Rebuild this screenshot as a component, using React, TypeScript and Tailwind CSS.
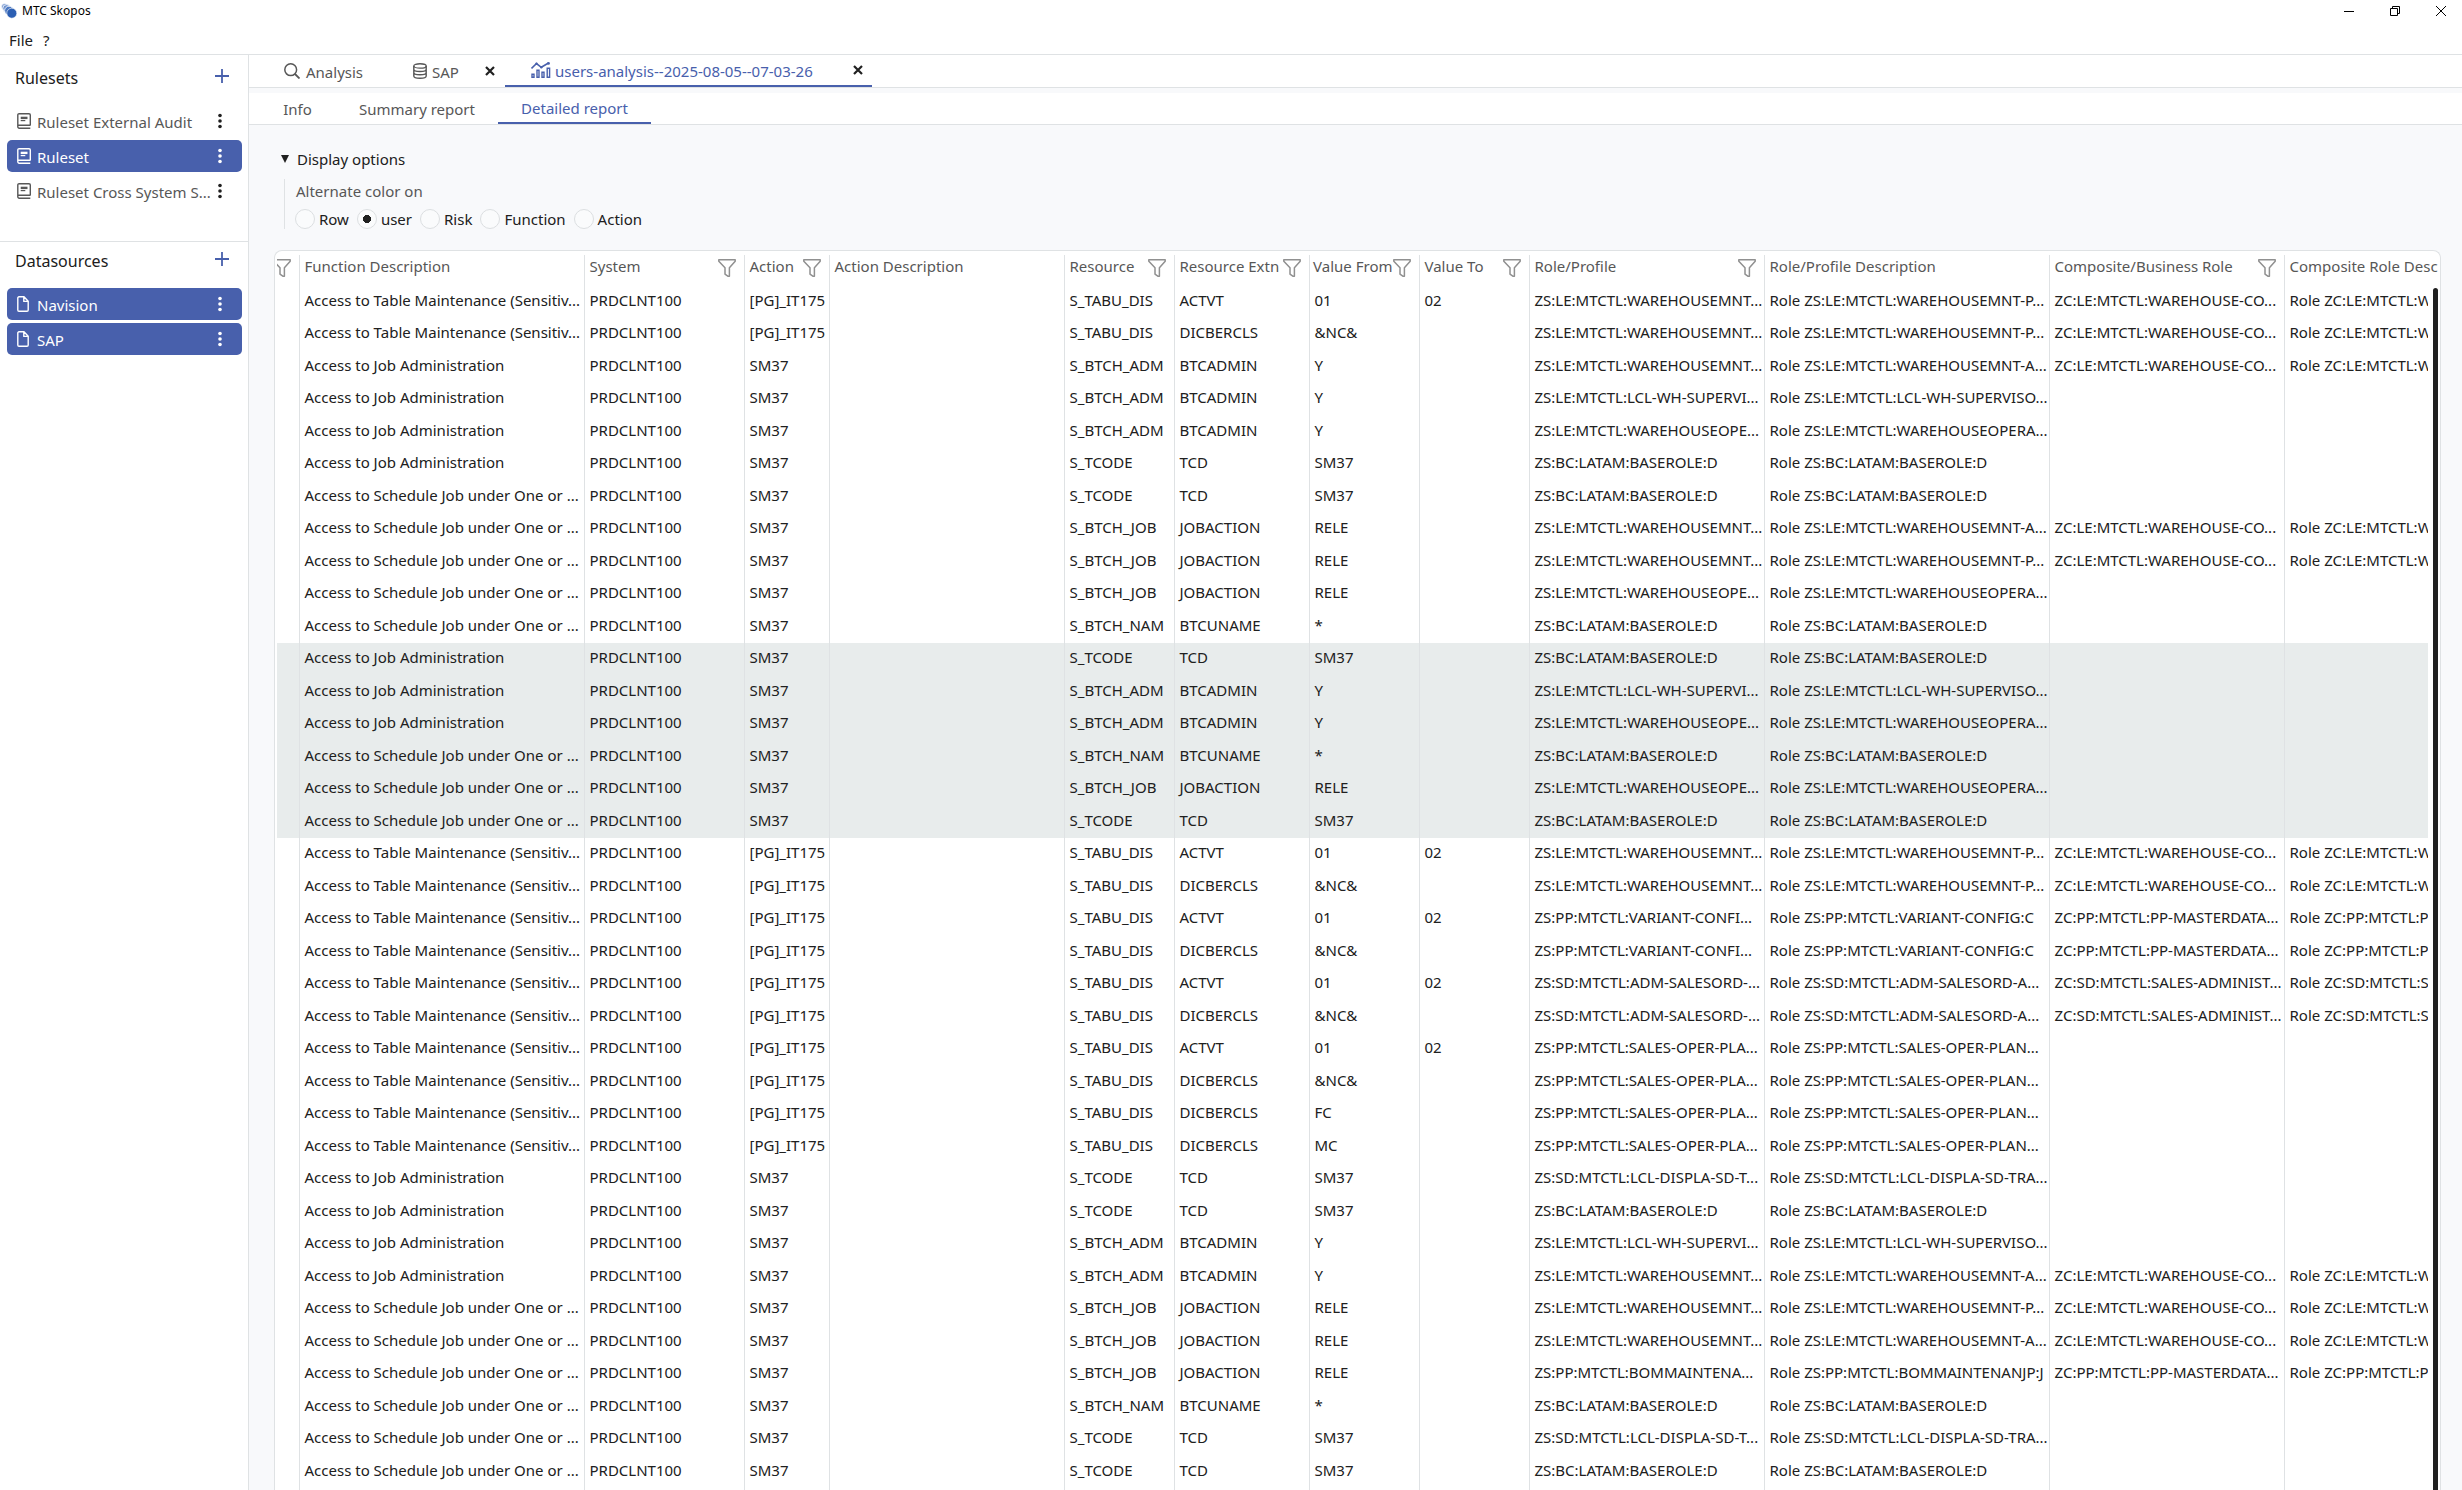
import type { ReactNode } from 'react';

interface Column {
  title: string;
  width: number;
  filter?: boolean;
}

const COLUMNS: Column[] = [
  { title: '', width: 22, filter: true },
  { title: 'Function Description', width: 285 },
  { title: 'System', width: 160, filter: true },
  { title: 'Action', width: 85, filter: true },
  { title: 'Action Description', width: 235 },
  { title: 'Resource', width: 110, filter: true },
  { title: 'Resource Extn', width: 135, filter: true },
  { title: 'Value From', width: 110, filter: true },
  { title: 'Value To', width: 110, filter: true },
  { title: 'Role/Profile', width: 235, filter: true },
  { title: 'Role/Profile Description', width: 285 },
  { title: 'Composite/Business Role', width: 235, filter: true },
  { title: 'Composite Role Description', width: 285 },
];

const TABLE = ['Access to Table Maintenance (Sensitiv...', '[PG]_IT175'];
const JOB = ['Access to Job Administration', 'SM37'];
const SCHEDULE = ['Access to Schedule Job under One or ...', 'SM37'];

const DIS_ACTVT = ['S_TABU_DIS', 'ACTVT', '01', '02'];
const disClass = (value: string) => ['S_TABU_DIS', 'DICBERCLS', value, ''];
const ADM = ['S_BTCH_ADM', 'BTCADMIN', 'Y', ''];
const TCODE = ['S_TCODE', 'TCD', 'SM37', ''];
const JOBACTION = ['S_BTCH_JOB', 'JOBACTION', 'RELE', ''];
const NAM = ['S_BTCH_NAM', 'BTCUNAME', '*', ''];

const WH_COMPOSITE = ['ZC:LE:MTCTL:WAREHOUSE-CO...', 'Role ZC:LE:MTCTL:WAREHOUSE-CO...'];
const PP_COMPOSITE = ['ZC:PP:MTCTL:PP-MASTERDATA...', 'Role ZC:PP:MTCTL:PP-MASTERDATA...'];
const SD_COMPOSITE = ['ZC:SD:MTCTL:SALES-ADMINIST...', 'Role ZC:SD:MTCTL:SALES-ADMINIST...'];

const WH_P = ['ZS:LE:MTCTL:WAREHOUSEMNT...', 'Role ZS:LE:MTCTL:WAREHOUSEMNT-P...', ...WH_COMPOSITE];
const WH_A = ['ZS:LE:MTCTL:WAREHOUSEMNT...', 'Role ZS:LE:MTCTL:WAREHOUSEMNT-A...', ...WH_COMPOSITE];
const SUPERVISOR = ['ZS:LE:MTCTL:LCL-WH-SUPERVI...', 'Role ZS:LE:MTCTL:LCL-WH-SUPERVISO...', '', ''];
const OPERATOR = ['ZS:LE:MTCTL:WAREHOUSEOPE...', 'Role ZS:LE:MTCTL:WAREHOUSEOPERA...', '', ''];
const BASE = ['ZS:BC:LATAM:BASEROLE:D', 'Role ZS:BC:LATAM:BASEROLE:D', '', ''];
const VARIANT = ['ZS:PP:MTCTL:VARIANT-CONFI...', 'Role ZS:PP:MTCTL:VARIANT-CONFIG:C', ...PP_COMPOSITE];
const SALESORD = ['ZS:SD:MTCTL:ADM-SALESORD-...', 'Role ZS:SD:MTCTL:ADM-SALESORD-A...', ...SD_COMPOSITE];
const SALES_OPER = ['ZS:PP:MTCTL:SALES-OPER-PLA...', 'Role ZS:PP:MTCTL:SALES-OPER-PLAN...', '', ''];
const DISPLAY = ['ZS:SD:MTCTL:LCL-DISPLA-SD-T...', 'Role ZS:SD:MTCTL:LCL-DISPLA-SD-TRA...', '', ''];
const BOM = ['ZS:PP:MTCTL:BOMMAINTENA...', 'Role ZS:PP:MTCTL:BOMMAINTENANJP:J', ...PP_COMPOSITE];

// One group per user, groups alternate in colour
const GROUPS: string[][][][] = [
  [
    [TABLE, DIS_ACTVT, WH_P],
    [TABLE, disClass('&NC&'), WH_P],
    [JOB, ADM, WH_A],
    [JOB, ADM, SUPERVISOR],
    [JOB, ADM, OPERATOR],
    [JOB, TCODE, BASE],
    [SCHEDULE, TCODE, BASE],
    [SCHEDULE, JOBACTION, WH_A],
    [SCHEDULE, JOBACTION, WH_P],
    [SCHEDULE, JOBACTION, OPERATOR],
    [SCHEDULE, NAM, BASE],
  ],
  [
    [JOB, TCODE, BASE],
    [JOB, ADM, SUPERVISOR],
    [JOB, ADM, OPERATOR],
    [SCHEDULE, NAM, BASE],
    [SCHEDULE, JOBACTION, OPERATOR],
    [SCHEDULE, TCODE, BASE],
  ],
  [
    [TABLE, DIS_ACTVT, WH_P],
    [TABLE, disClass('&NC&'), WH_P],
    [TABLE, DIS_ACTVT, VARIANT],
    [TABLE, disClass('&NC&'), VARIANT],
    [TABLE, DIS_ACTVT, SALESORD],
    [TABLE, disClass('&NC&'), SALESORD],
    [TABLE, DIS_ACTVT, SALES_OPER],
    [TABLE, disClass('&NC&'), SALES_OPER],
    [TABLE, disClass('FC'), SALES_OPER],
    [TABLE, disClass('MC'), SALES_OPER],
    [JOB, TCODE, DISPLAY],
    [JOB, TCODE, BASE],
    [JOB, ADM, SUPERVISOR],
    [JOB, ADM, WH_A],
    [SCHEDULE, JOBACTION, WH_P],
    [SCHEDULE, JOBACTION, WH_A],
    [SCHEDULE, JOBACTION, BOM],
    [SCHEDULE, NAM, BASE],
    [SCHEDULE, TCODE, DISPLAY],
    [SCHEDULE, TCODE, BASE],
  ],
];

const ROWS = GROUPS.flatMap((group, g) =>
  group.map(([fn, resource, role]) => ({
    shaded: g % 2 === 1,
    cells: ['', fn[0], 'PRDCLNT100', fn[1], '', ...resource, ...role],
  }))
);

const RULESETS = [
  { name: 'Ruleset External Audit', selected: false },
  { name: 'Ruleset', selected: true },
  { name: 'Ruleset Cross System S...', selected: false },
];

const DATASOURCES = ['Navision', 'SAP'];

function Logo() {
  return (
    <svg width="16" height="16" viewBox="0 0 16 16" className="shrink-0" aria-hidden="true">
      <circle cx="3.6" cy="3.6" r="3.2" fill="#8aa6d6" stroke="#fff" strokeWidth="0.8" />
      <circle cx="5.6" cy="5.4" r="3.8" fill="#6f93cf" stroke="#fff" strokeWidth="0.8" />
      <circle cx="8" cy="7.6" r="4.4" fill="#4d79c2" stroke="#fff" strokeWidth="0.8" />
      <circle cx="10.8" cy="10.2" r="5" fill="#2c5fb3" stroke="#fff" strokeWidth="0.6" />
    </svg>
  );
}

function BookIcon() {
  return (
    <svg width="14" height="16" viewBox="0 0 14 16" fill="none" stroke="currentColor" strokeWidth="1.4" className="shrink-0" aria-hidden="true">
      <path d="M13.3 12.3H.8M13.300 15.200H2.200A1.400 1.400 0 0 1 .8 13.800V2A1.300 1.300 0 0 1 2.100.7h9.900a1.300 1.300 0 0 1 1.300 1.300v10.500" />
      <path d="M3.7 3.7h6.800v2.400H3.700z" fill="currentColor" stroke="none" />
      <path d="M3.700 7.600h4.600" strokeWidth="1.200" />
    </svg>
  );
}

function FileIcon() {
  return (
    <svg width="12" height="16" viewBox="0 0 12 16" fill="none" stroke="currentColor" strokeWidth="1.4" strokeLinejoin="round" className="shrink-0" aria-hidden="true">
      <path d="M.8 2A1.2 1.2 0 0 1 2 .8h5l4.2 4.4V14a1.2 1.2 0 0 1-1.2 1.2H2A1.2 1.2 0 0 1 .8 14zM6.8.8v4.6h4.4" />
    </svg>
  );
}

function DotsIcon() {
  return (
    <svg width="4" height="16" viewBox="0 0 4 16" fill="currentColor" aria-hidden="true">
      <circle cx="2" cy="2.5" r="1.8" />
      <circle cx="2" cy="8" r="1.8" />
      <circle cx="2" cy="13.5" r="1.8" />
    </svg>
  );
}

function PlusIcon() {
  return (
    <svg width="14" height="14" viewBox="0 0 14 14" stroke="currentColor" strokeWidth="1.8" aria-hidden="true">
      <path d="M7 0v14M0 7h14" />
    </svg>
  );
}

function SearchIcon() {
  return (
    <svg width="16" height="16" viewBox="0 0 16 16" fill="none" stroke="currentColor" strokeWidth="1.5" aria-hidden="true">
      <circle cx="6.7" cy="6.7" r="5.9" />
      <path d="M11 11l4.5 4.5" strokeWidth="1.8" />
    </svg>
  );
}

function DatabaseIcon() {
  return (
    <svg width="14" height="16" viewBox="0 0 14 16" fill="none" stroke="currentColor" strokeWidth="1.4" aria-hidden="true">
      <ellipse cx="7" cy="2.9" rx="6.2" ry="2.2" />
      <path d="M.8 2.9v10c0 1.300 2.800 2.300 6.200 2.300s6.200-1 6.200-2.300v-10M.8 6.200c0 1.300 2.800 2.300 6.200 2.300s6.200-1 6.200-2.300M.8 9.500c0 1.300 2.800 2.300 6.200 2.300s6.200-1 6.200-2.300" />
    </svg>
  );
}

function ChartIcon() {
  return (
    <svg width="20" height="16" viewBox="0 0 20 16" fill="none" stroke="currentColor" strokeWidth="1.4" aria-hidden="true">
      <path d="M.5 6.500L5.500 1.500l4.800 3.800L17.500 1" strokeWidth="1.600" />
      <circle cx="5.500" cy="1.800" r="1.200" fill="currentColor" stroke="none" />
      <circle cx="10.300" cy="5.200" r="1.200" fill="currentColor" stroke="none" />
      <circle cx="17.500" cy="1.400" r="1.400" fill="currentColor" stroke="none" />
      <path d="M1 12.200h2v3H1zM6 8.200h2v7H6zM11 10.200h2v5h-2zM16.200 6.200h2.400v9h-2.400z" />
    </svg>
  );
}

function FunnelIcon() {
  return (
    <svg width="18" height="18" viewBox="0 0 18 18" fill="none" stroke="#909090" strokeWidth="1.5" strokeLinejoin="round" className="shrink-0" aria-hidden="true">
      <path d="M.8.8h16.400v1.400L11.400 8.800v8.400H9.800L7 15.200V8.800L.8 2.200z" />
    </svg>
  );
}

function CloseIcon() {
  return (
    <svg width="10" height="10" viewBox="0 0 10 10" stroke="currentColor" strokeWidth="2.2" aria-hidden="true">
      <path d="M1 1l8 8M9 1l-8 8" />
    </svg>
  );
}

function SectionHeader({ title }: { title: string }) {
  return (
    <div className="flex items-center justify-between pl-[15px] pr-[19px]">
      <h2 className="text-base leading-6">{title}</h2>
      <button type="button" aria-label={`Add to ${title}`} className="pb-[5px] text-[#4860ac]">
        <PlusIcon />
      </button>
    </div>
  );
}

function SidebarItem({ name, selected, icon }: { name: string; selected: boolean; icon: ReactNode }) {
  return (
    <li
      className={`flex h-8 items-center rounded-[5px] pl-[10px] pr-5 ${
        selected ? 'bg-[#4860ac] text-white' : 'text-[#575757]'
      }`}
    >
      <button type="button" className="flex flex-1 items-center">
        <span className="flex w-5 shrink-0">{icon}</span>
        <span className="whitespace-nowrap pt-px">{name}</span>
      </button>
      <button type="button" aria-label={`${name} menu`} className={selected ? 'text-white' : 'text-[#202020]'}>
        <DotsIcon />
      </button>
    </li>
  );
}

function Sidebar() {
  return (
    <aside className="w-[249px] shrink-0 border-r border-[#dfe2e4] bg-white">
      <section className="h-[187px] border-b border-[#dfe2e4] pt-[11px]">
        <SectionHeader title="Rulesets" />
        <ul className="mt-[15px] flex flex-col gap-[3px] pl-[7px] pr-[6px]">
          {RULESETS.map((r) => (
            <SidebarItem key={r.name} name={r.name} selected={r.selected} icon={<BookIcon />} />
          ))}
        </ul>
      </section>
      <section className="pt-[7px]">
        <SectionHeader title="Datasources" />
        <ul className="mt-[15px] flex flex-col gap-[3px] pl-[7px] pr-[6px]">
          {DATASOURCES.map((name) => (
            <SidebarItem key={name} name={name} selected icon={<FileIcon />} />
          ))}
        </ul>
      </section>
    </aside>
  );
}

function TitleBar() {
  return (
    <header className="bg-white">
      <div className="flex h-[22px] items-center justify-between pr-4">
        <div className="flex items-center gap-[5px] pl-[1px] text-xs text-black">
          <Logo />
          <h1>MTC Skopos</h1>
        </div>
        <div className="flex items-center gap-9 text-black">
          <button type="button" aria-label="Minimize">
            <svg width="10" height="10" viewBox="0 0 10 10" stroke="currentColor" aria-hidden="true">
              <path d="M0 5.500h10" />
            </svg>
          </button>
          <button type="button" aria-label="Restore">
            <svg width="10" height="10" viewBox="0 0 10 10" fill="none" stroke="currentColor" aria-hidden="true">
              <path d="M.5 2.500h7v7h-7zM2.500 2.500v-2h7v7h-2" />
            </svg>
          </button>
          <button type="button" aria-label="Close">
            <svg width="10" height="10" viewBox="0 0 10 10" stroke="currentColor" aria-hidden="true">
              <path d="M0 0l10 10M10 0L0 10" />
            </svg>
          </button>
        </div>
      </div>
      <nav className="flex h-[33px] items-center gap-[10px] border-b border-[#dfe2e4] pl-[9px] pt-1">
        <button type="button">File</button>
        <button type="button">?</button>
      </nav>
    </header>
  );
}

function Tabs() {
  return (
    <nav className="flex h-[33px] border-b border-[#dfe2e4] bg-white pl-4 text-[#575757]">
      <div className="flex w-[128px] items-center pl-[19px]">
        <button type="button" className="flex items-center gap-[6px]">
          <SearchIcon />
          <span className="pt-[2px]">Analysis</span>
        </button>
      </div>
      <div className="flex w-[112px] items-center justify-between pl-5 pr-[10px]">
        <button type="button" className="flex items-center gap-[5px]">
          <DatabaseIcon />
          <span className="pt-[2px]">SAP</span>
        </button>
        <button type="button" aria-label="Close SAP" className="text-[#202020]">
          <CloseIcon />
        </button>
      </div>
      <div className="flex w-[367px] items-center justify-between border-b-2 border-[#4860ac] pl-[26px] pr-[9px]">
        <button type="button" className="flex items-center gap-1 text-[#4860ac]">
          <ChartIcon />
          <span className="pt-[2px]">users-analysis--2025-08-05--07-03-26</span>
        </button>
        <button type="button" aria-label="Close users-analysis" className="text-[#202020]">
          <CloseIcon />
        </button>
      </div>
    </nav>
  );
}

function SubTabs() {
  return (
    <nav className="mt-[5px] flex h-8 border-b border-[#dfe2e4] bg-white pl-[10px] text-[#575757]">
      <button type="button" className="w-[77px]">Info</button>
      <button type="button" className="w-[162px]">Summary report</button>
      <button type="button" className="w-[153px] border-b-2 border-[#4860ac] text-[#4860ac]">Detailed report</button>
    </nav>
  );
}

function DisplayOptions() {
  return (
    <details open className="pl-[7px]">
      <summary className="flex cursor-pointer list-none items-center gap-2">
        <svg width="8" height="8" viewBox="0 0 8 8" fill="currentColor" aria-hidden="true">
          <path d="M0 0h8L4 8z" />
        </svg>
        Display options
      </summary>
      <fieldset className="ml-[3px] mt-[10px] border-l border-[#dfe2e4] pl-[10px]">
        <legend className="sr-only">Alternate color on</legend>
        <p className="pl-px leading-6 text-[#575757]" aria-hidden="true">Alternate color on</p>
        <div className="flex h-[26px] items-center gap-2 pt-[6px]">
          {['Row', 'user', 'Risk', 'Function', 'Action'].map((name) => (
            <label key={name} className="flex items-center gap-1">
              <input
                type="radio"
                name="alternate-color"
                defaultChecked={name === 'user'}
                className="size-5 appearance-none rounded-full border border-[#dcdfe1] bg-[#fafbfc] checked:bg-[radial-gradient(circle,#202020_4px,#fafbfc_4px)]"
              />
              {name}
            </label>
          ))}
        </div>
      </fieldset>
    </details>
  );
}

function ReportTable() {
  return (
    <div className="relative mt-[21px] flex-1 overflow-hidden rounded-t-lg border border-b-0 border-[#dfe2e4] bg-white px-[2px] pt-1">
      <div className="h-full overflow-hidden">
        <table className="w-[2292px] table-fixed border-collapse">
          <colgroup>
            {COLUMNS.map((c, i) => (
              <col key={i} style={{ width: c.width }} />
            ))}
          </colgroup>
          <thead>
            <tr className="text-left text-[#575757]">
              {COLUMNS.map((c, i) => (
                <th key={i} className="border-l border-[#dfe2e4] p-0 font-normal first:border-l-0">
                  <div className="flex h-[31px] items-start justify-end overflow-hidden pr-2">
                    {c.title && <span className="flex-1 whitespace-nowrap pl-[5px] leading-[22px]">{c.title}</span>}
                    {c.filter && (
                      <button type="button" aria-label={`Filter ${c.title}`} className="mt-1 shrink-0">
                        <FunnelIcon />
                      </button>
                    )}
                  </div>
                </th>
              ))}
            </tr>
          </thead>
          <tbody>
            {ROWS.map((row, r) => (
              <tr key={r} className={`odd:h-8 even:h-[33px] ${row.shaded ? 'bg-[#e8ecec]' : ''}`}>
                {row.cells.map((text, i) => (
                  <td key={i} className="overflow-hidden whitespace-nowrap border-l border-[#dfe2e4] p-0 pb-[5px] pl-[5px] first:border-l-0">
                    {text}
                  </td>
                ))}
              </tr>
            ))}
            <tr className="h-8">
              {COLUMNS.map((_, i) => (
                <td key={i} className="border-l border-[#dfe2e4] p-0 first:border-l-0" />
              ))}
            </tr>
          </tbody>
        </table>
      </div>
      {/* Scrollbar over the right edge of the body */}
      <div className="absolute bottom-0 right-[2px] top-[37px] flex w-[10px] justify-end bg-white">
        <div className="w-[5px] rounded-t-full bg-[#202020]" />
      </div>
    </div>
  );
}

export default function App() {
  return (
    <div className="flex h-screen flex-col overflow-hidden bg-[#f8f9fb] font-['Noto_Sans',sans-serif] text-[15px] leading-5 text-[#202020]">
      <TitleBar />
      <div className="flex min-h-0 flex-1">
        <Sidebar />
        <div className="flex min-w-0 flex-1 flex-col">
          <Tabs />
          <SubTabs />
          <main className="flex min-h-0 flex-1 flex-col pl-[25px] pr-[21px] pt-6">
            <DisplayOptions />
            <ReportTable />
          </main>
        </div>
      </div>
    </div>
  );
}
